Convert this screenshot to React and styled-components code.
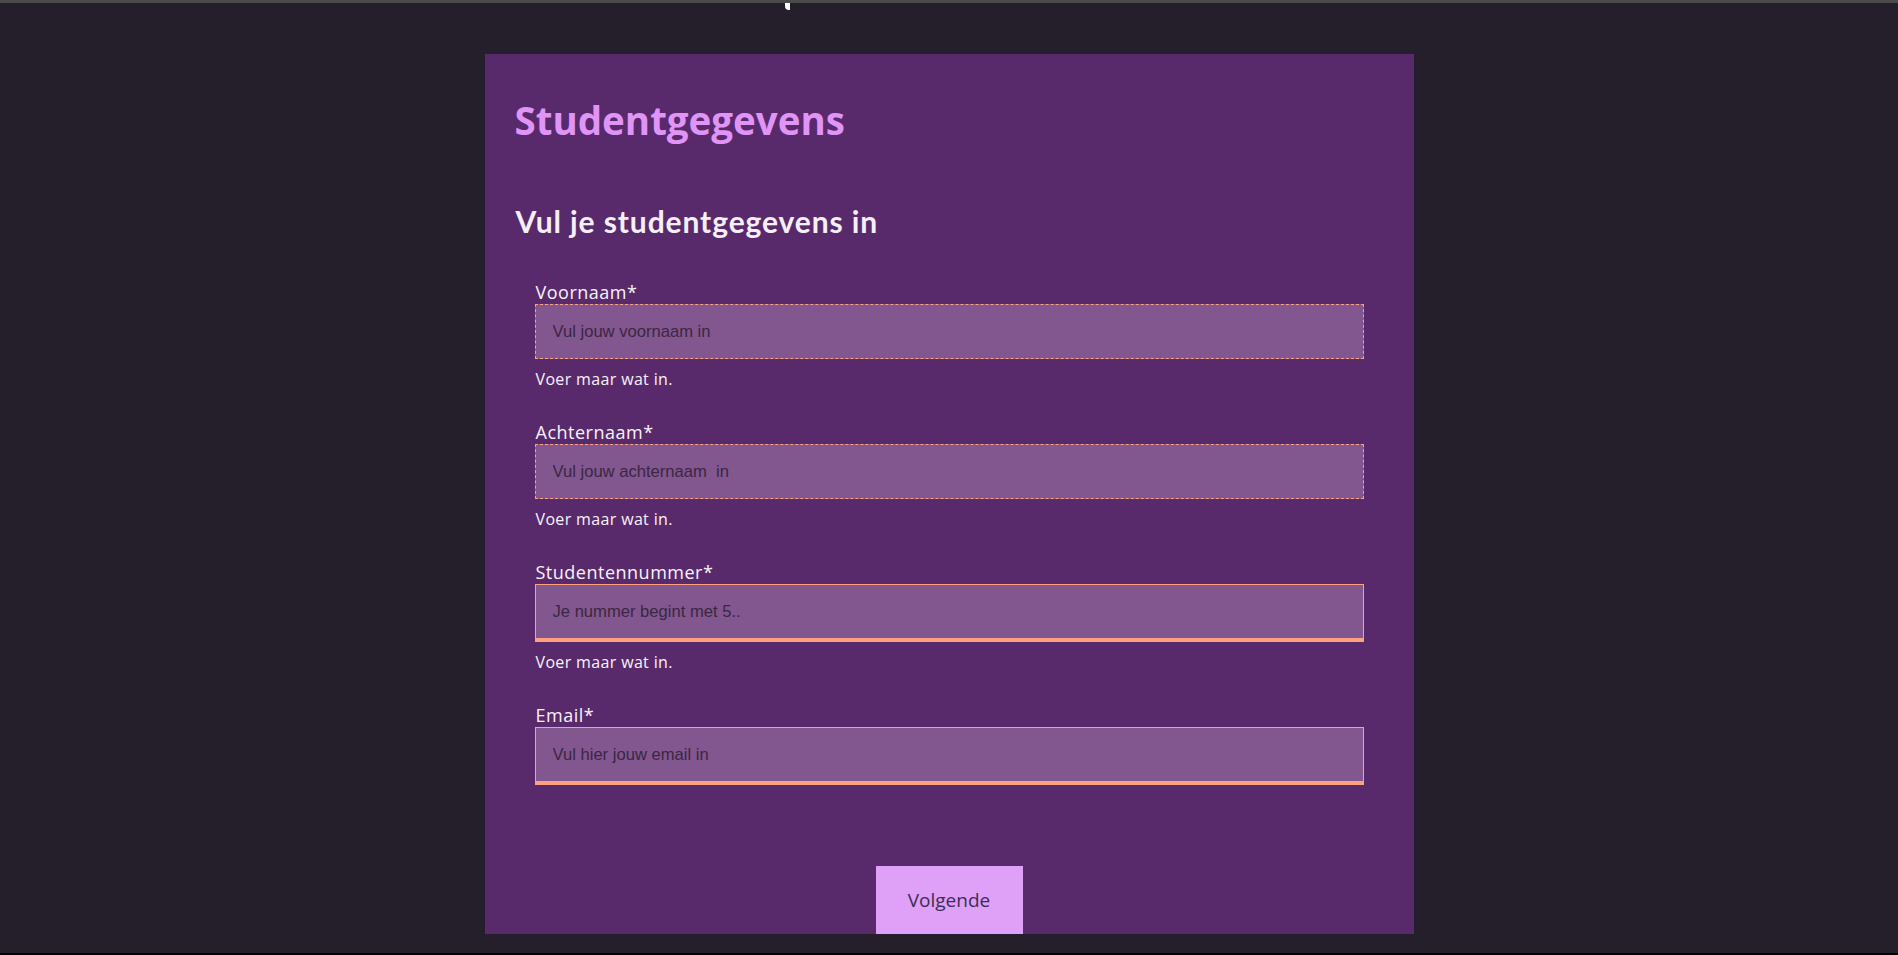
import styled, { createGlobalStyle } from "styled-components";

const GlobalStyle = createGlobalStyle`
  html, body {
    margin: 0;
    padding: 0;
    background: #251f2b;
  }
  * {
    box-sizing: border-box;
  }
`;

const fields = [
  { id: "voornaam", label: "Voornaam*", placeholder: "Vul jouw voornaam in", state: "idle", hint: true },
  { id: "achternaam", label: "Achternaam*", placeholder: "Vul jouw achternaam  in", state: "idle", hint: true },
  { id: "studentnummer", label: "Studentennummer*", placeholder: "Je nummer begint met 5..", state: "valid", hint: true },
  { id: "email", label: "Email*", placeholder: "Vul hier jouw email in", state: "valid", hint: false },
];

const App = () => {
  return (
    <>
      <GlobalStyle />
      <Page>
        <TopBar>
          <Caret />
        </TopBar>
        <Main>
          <Panel>
            <Title>Studentgegevens</Title>
            <Subtitle>Vul je studentgegevens in</Subtitle>
            <Form onSubmit={(e) => e.preventDefault()}>
              {fields.map((f) => (
                <Field key={f.id}>
                  <Label htmlFor={f.id}>{f.label}</Label>
                  <Input id={f.id} type="text" placeholder={f.placeholder} $state={f.state} />
                  {f.hint && <Hint>Voer maar wat in.</Hint>}
                </Field>
              ))}
              <SubmitButton type="submit">Volgende</SubmitButton>
            </Form>
          </Panel>
        </Main>
        <BottomBar />
      </Page>
    </>
  );
};

const Page = styled.div`
  min-height: 100vh;
  display: flex;
  flex-direction: column;
`;

const TopBar = styled.div`
  position: relative;
  height: 3px;
  background: #4b4b4b;
  flex-shrink: 0;
`;

const Caret = styled.span`
  position: absolute;
  left: 785px;
  top: 3px;
  width: 5px;
  height: 7px;
  background: #ffffff;
  border-bottom-left-radius: 4px;
`;

const Main = styled.main`
  flex: 1;
  padding-top: 51px;
`;

const BottomBar = styled.div`
  height: 2px;
  background: #000000;
  flex-shrink: 0;
`;

const Panel = styled.section`
  width: 929px;
  margin: 0 auto;
  background: #592a6b;
  padding: 47px 0 0;
  display: flex;
  flex-direction: column;
`;

const Title = styled.h1`
  margin: 0;
  padding-left: 30px;
  font-family: "Open Sans", sans-serif;
  font-weight: 700;
  font-size: 38.5px;
  line-height: 38px;
  color: #df94f6;
`;

const Subtitle = styled.h2`
  margin: 65px 0 0;
  padding-left: 31px;
  font-family: Lato, sans-serif;
  font-weight: 700;
  font-size: 30px;
  line-height: 35px;
  letter-spacing: 0.9px;
  color: #f6f0f6;
`;

const Form = styled.form`
  margin-top: 41px;
  padding: 0 50px;
  display: flex;
  flex-direction: column;
  gap: 31px;
`;

const Field = styled.div`
  display: flex;
  flex-direction: column;
`;

const Label = styled.label`
  font-family: "Open Sans", sans-serif;
  font-size: 18px;
  line-height: 24px;
  letter-spacing: 0.5px;
  color: #f8f2f8;
  padding-left: 1px;
`;

const Input = styled.input`
  width: 100%;
  height: ${(p) => (p.$state === "valid" ? "58px" : "55px")};
  padding: 0 17px;
  background: #82568f;
  border: 1px ${(p) => (p.$state === "valid" ? "solid" : "dashed")} #ffa07e;
  border-bottom-width: ${(p) => (p.$state === "valid" ? "4px" : "1px")};
  border-radius: 0;
  font-family: "Liberation Sans", Arial, sans-serif;
  font-size: 16.6px;
  color: #3a2540;
  outline: none;

  &::placeholder {
    color: #3b2742;
    opacity: 1;
  }
`;

const Hint = styled.p`
  margin: 10px 0 0;
  padding-left: 1px;
  font-family: "Open Sans", sans-serif;
  font-size: 16px;
  line-height: 20px;
  letter-spacing: 0.35px;
  color: #f8f2f8;
`;

const SubmitButton = styled.button`
  align-self: center;
  margin-top: 50px;
  width: 147px;
  height: 68px;
  border: none;
  border-radius: 0;
  background: #dfa0f8;
  font-family: "Open Sans", sans-serif;
  font-size: 19px;
  color: #3d2d52;
  cursor: pointer;
`;

export default App;
